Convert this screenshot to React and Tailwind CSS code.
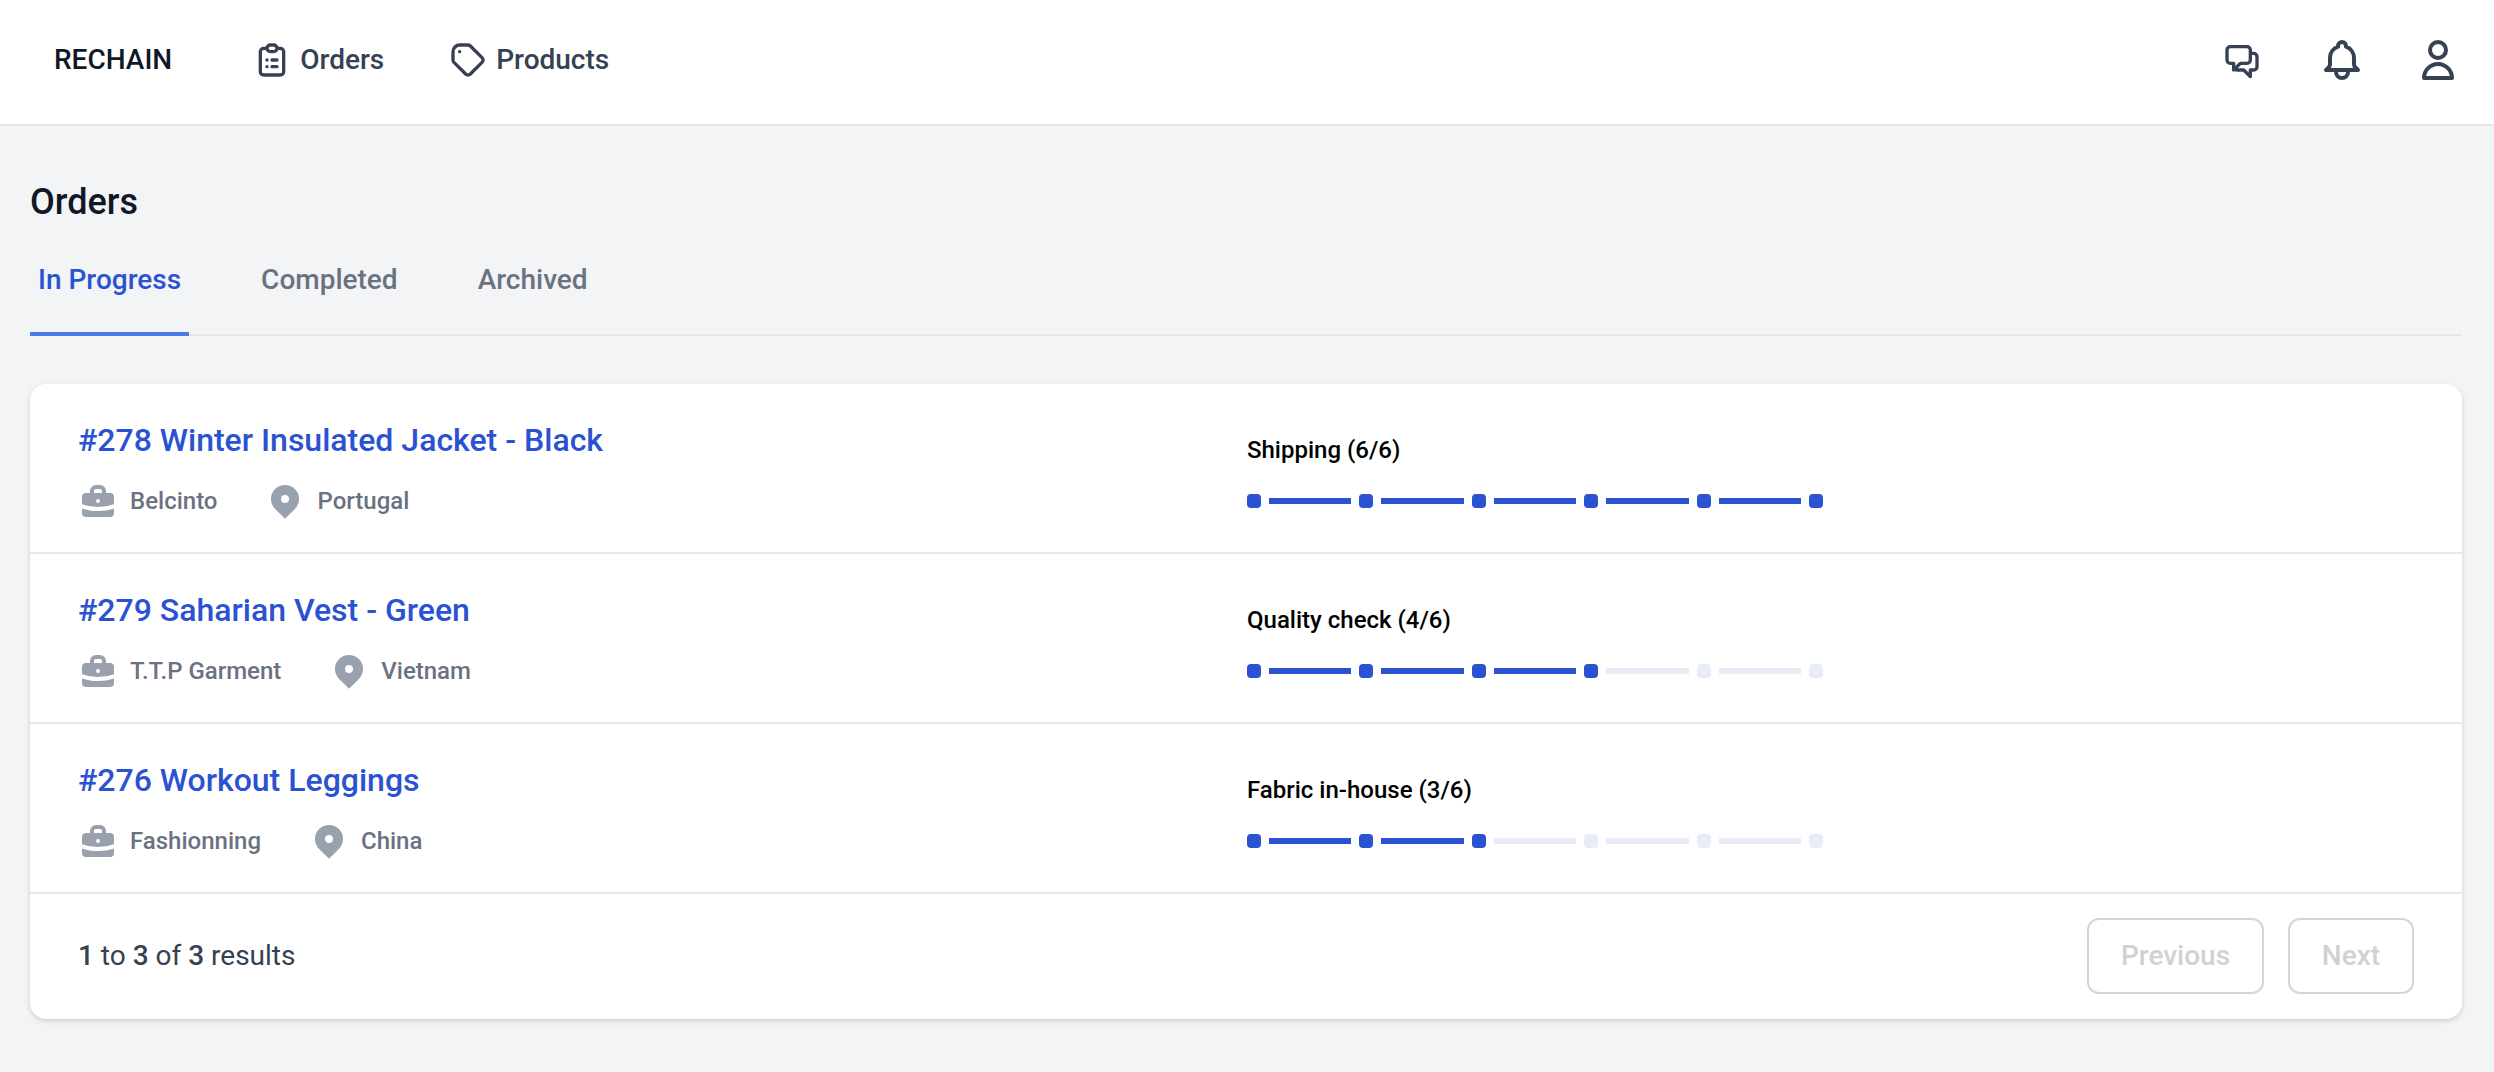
import React from 'react';

const rows = [
  { title: '#278 Winter Insulated Jacket - Black', company: 'Belcinto', country: 'Portugal', label: 'Shipping (6/6)', done: 6 },
  { title: '#279 Saharian Vest - Green', company: 'T.T.P Garment', country: 'Vietnam', label: 'Quality check (4/6)', done: 4 },
  { title: '#276 Workout Leggings', company: 'Fashionning', country: 'China', label: 'Fabric in-house (3/6)', done: 3 },
];

const Outline = ({ d, className }) => (
  <svg className={className} viewBox="0 0 24 24" fill="none" stroke="currentColor" strokeWidth="2" strokeLinecap="round" strokeLinejoin="round">
    <path d={d} />
  </svg>
);

const Briefcase = () => (
  <svg className="w-[40px] h-[40px] shrink-0 text-gray-400" viewBox="0 0 20 20" fill="currentColor">
    <path fillRule="evenodd" clipRule="evenodd" d="M6 6V5a3 3 0 013-3h2a3 3 0 013 3v1h2a2 2 0 012 2v3.57A22.952 22.952 0 0110 13a22.95 22.95 0 01-8-1.43V8a2 2 0 012-2h2zm2-1a1 1 0 011-1h2a1 1 0 011 1v1H8V5zm1 5a1 1 0 011-1h.01a1 1 0 110 2H10a1 1 0 01-1-1z" />
    <path d="M2 13.692V16a2 2 0 002 2h12a2 2 0 002-2v-2.308A24.974 24.974 0 0110 15c-2.796 0-5.487-.46-8-1.308z" />
  </svg>
);

const Marker = () => (
  <svg className="w-[40px] h-[40px] shrink-0 text-gray-400" viewBox="0 0 20 20" fill="currentColor">
    <path fillRule="evenodd" clipRule="evenodd" d="M5.05 4.05a7 7 0 119.9 9.9L10 18.9l-4.95-4.95a7 7 0 010-9.9zM10 11a2 2 0 100-4 2 2 0 000 4z" />
  </svg>
);

// six dots joined by five bars, the first `done` dots are blue
const Steps = ({ done }) => (
  <div className="flex items-center gap-[8px] w-[576px] h-[14px]">
    {[1, 2, 3, 4, 5, 6].map((n) => (
      <React.Fragment key={n}>
        {n > 1 && <div className={`flex-1 h-[6px] ${n <= done ? 'bg-[#2a52d1]' : 'bg-[#e8ecf9]'}`} />}
        <div className={`w-[14px] h-[14px] rounded-[4px] shrink-0 ${n <= done ? 'bg-[#2a52d1]' : 'bg-[#e8ecf9]'}`} />
      </React.Fragment>
    ))}
  </div>
);

const Row = ({ row }) => (
  <div className="grid grid-cols-2 h-[170px] border-b-2 border-gray-200">
    <div className="pl-[48px] pt-[32px]">
      <div className="text-[32px] leading-[48px] font-medium text-[#2a52d1]">{row.title}</div>
      <div className="flex items-center mt-[17px] text-[24px] leading-[40px] font-medium text-gray-500">
        <Briefcase />
        <span className="ml-[12px]">{row.company}</span>
        <div className="ml-[48px]"><Marker /></div>
        <span className="ml-[12px]">{row.country}</span>
      </div>
    </div>
    <div className="pt-[48px] pl-[1px]">
      <div className="text-[24px] leading-[36px] font-medium text-black">{row.label}</div>
      <div className="mt-[26px]"><Steps done={row.done} /></div>
    </div>
  </div>
);

const App = () => {
  return (
    <div className="min-h-[1072px] bg-gray-100 font-['Roboto',sans-serif]">
      <header className="flex items-center justify-between h-[126px] bg-white border-b-2 border-gray-200 pl-[54px] pr-[32px] pb-[4px]">
        <div className="flex items-center text-[28px] leading-[40px] font-medium">
          <span className="text-gray-900 mr-[80px]">RECHAIN</span>
          <a className="flex items-center gap-[8px] text-gray-700 mr-[64px]">
            <Outline className="w-[40px] h-[40px]" d="M9 5H7a2 2 0 00-2 2v12a2 2 0 002 2h10a2 2 0 002-2V7a2 2 0 00-2-2h-2M9 5a2 2 0 002 2h2a2 2 0 002-2M9 5a2 2 0 012-2h2a2 2 0 012 2m-3 7h3m-3 4h3m-6-4h.01M9 16h.01" />
            Orders
          </a>
          <a className="flex items-center gap-[8px] text-gray-700">
            <Outline className="w-[40px] h-[40px]" d="M7 7h.01M7 3h5c.512 0 1.024.195 1.414.586l7 7a2 2 0 010 2.828l-7 7a2 2 0 01-2.828 0l-7-7A1.994 1.994 0 013 12V7a4 4 0 014-4z" />
            Products
          </a>
        </div>
        <div className="flex items-center text-gray-700">
          <Outline className="w-[40px] h-[40px]" d="M17 8h2a2 2 0 012 2v6a2 2 0 01-2 2h-2v4l-4-4H9a1.994 1.994 0 01-1.414-.586m0 0L11 14h4a2 2 0 002-2V6a2 2 0 00-2-2H5a2 2 0 00-2 2v6a2 2 0 002 2h2v4l.586-.586z" />
          <Outline className="w-[48px] h-[48px] ml-[56px]" d="M15 17h5l-1.405-1.405A2.032 2.032 0 0118 14.158V11a6.002 6.002 0 00-4-5.659V5a2 2 0 10-4 0v.341C7.67 6.165 6 8.388 6 11v3.159c0 .538-.214 1.055-.595 1.436L4 17h5m6 0v1a3 3 0 11-6 0v-1m6 0H9" />
          <Outline className="w-[48px] h-[48px] ml-[48px]" d="M16 7a4 4 0 11-8 0 4 4 0 018 0zM12 14a7 7 0 00-7 7h14a7 7 0 00-7-7z" />
        </div>
      </header>

      <main className="pl-[30px] pr-[32px] pt-[56px]">
        <h1 className="text-[36px] leading-[40px] font-medium text-gray-900">Orders</h1>

        <div className="flex gap-[64px] mt-[38px] border-b-2 border-gray-200 text-[28px] leading-[40px] font-medium">
          <div className="px-[8px] pb-[32px] -mb-[2px] border-b-[4px] border-[#4a7cea] text-[#2a52d1]">In Progress</div>
          <div className="px-[8px] pb-[32px] text-gray-500">Completed</div>
          <div className="px-[8px] pb-[32px] text-gray-500">Archived</div>
        </div>

        <div className="mt-[48px] bg-white rounded-[16px] shadow-[0_2px_6px_rgba(0,0,0,0.1),0_2px_4px_rgba(0,0,0,0.06)] overflow-hidden">
          {rows.map((row) => (
            <Row key={row.title} row={row} />
          ))}
          <div className="flex items-center justify-between h-[125px] pl-[48px] pr-[48px] pb-[2px]">
            <p className="text-[28px] leading-[40px] text-gray-700">
              <span className="font-medium">1</span> to <span className="font-medium">3</span> of <span className="font-medium">3</span> results
            </p>
            <div className="flex gap-[24px]">
              <button className="h-[76px] w-[177px] rounded-[12px] border-2 border-gray-300 text-[28px] font-medium text-[#d1d1d1]">Previous</button>
              <button className="h-[76px] w-[126px] rounded-[12px] border-2 border-gray-300 text-[28px] font-medium text-[#d1d1d1]">Next</button>
            </div>
          </div>
        </div>
      </main>
    </div>
  );
};

export default App;
